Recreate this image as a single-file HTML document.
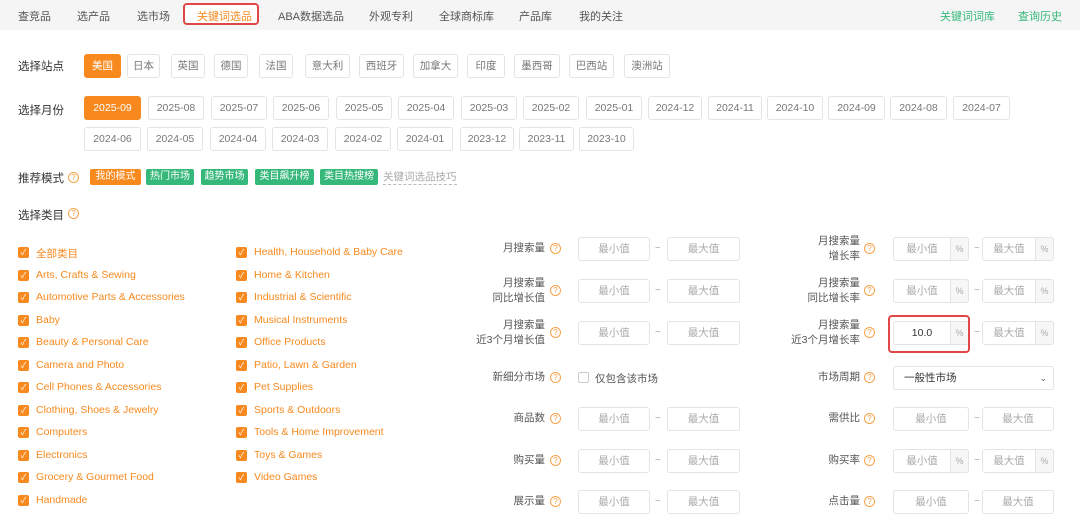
<!DOCTYPE html>
<html><head><meta charset="utf-8"><style>
*{box-sizing:border-box;margin:0;padding:0}
body{width:1080px;height:522px;background:#fff;font-family:"Liberation Sans","Noto Sans CJK SC",sans-serif;font-size:11px;color:#333;position:relative;overflow:hidden}
.a{position:absolute;white-space:nowrap}
.nav{position:absolute;left:0;top:0;width:1080px;height:30px;background:#f5f5f5}
.nv{position:absolute;top:8px;color:#555;font-size:11px}
.btn{position:absolute;height:24px;border:1px solid #e4e4e4;border-radius:3px;color:#777;font-size:10.5px;text-align:center;line-height:22px}
.on{background:#f7891e;border-color:#f7891e;color:#fff}
.lbl{position:absolute;font-size:11.5px;color:#333}
.tag{position:absolute;top:169px;height:16px;line-height:16px;color:#fff;font-size:10px;text-align:center;border-radius:2px;background:#35b87a}
.q{position:absolute;width:11px;height:11px;border:1px solid #f7a24a;border-radius:50%;color:#f7a24a;font-size:8px;line-height:9px;text-align:center}
.cb{position:absolute;width:11px;height:11px;background:#f7891e;border-radius:2px;color:#fff;font-size:8px;line-height:11px;text-align:center}
.ct{position:absolute;color:#f7891e;font-size:10.5px}
.in{position:absolute;height:24px;border:1px solid #e4e4e4;border-radius:3px;color:#aaa;font-size:10.5px;text-align:center;line-height:22px}
.pc{position:absolute;top:-1px;right:-1px;width:19px;height:24px;border:1px solid #e4e4e4;background:#f7f7f7;border-radius:0 3px 3px 0;color:#aaa;font-size:9px;line-height:22px}
.fl{position:absolute;text-align:right;color:#555;font-size:10.5px;line-height:15px}
.dash{position:absolute;color:#aaa;font-size:10px}
</style></head><body>
<div class="nav">
<span class="nv" style="left:18px">查竞品</span>
<span class="nv" style="left:77px">选产品</span>
<span class="nv" style="left:137px">选市场</span>
<div class="a" style="left:183px;top:3px;width:76px;height:22px;border:2px solid #e04848;border-radius:4px;background:#fff"></div>
<span class="nv" style="left:197px;color:#f7891e">关键词选品</span>
<span class="nv" style="left:278px">ABA数据选品</span>
<span class="nv" style="left:369px">外观专利</span>
<span class="nv" style="left:439px">全球商标库</span>
<span class="nv" style="left:519px">产品库</span>
<span class="nv" style="left:579px">我的关注</span>
<span class="nv" style="left:940px;color:#35b87a">关键词词库</span>
<span class="nv" style="left:1018px;color:#35b87a">查询历史</span>
</div>

<span class="lbl" style="left:18px;top:58px">选择站点</span>
<div class="btn on" style="left:84px;top:54px;width:37px">美国</div>
<div class="btn" style="left:127px;top:54px;width:33px">日本</div>
<div class="btn" style="left:171px;top:54px;width:34px">英国</div>
<div class="btn" style="left:214px;top:54px;width:34px">德国</div>
<div class="btn" style="left:259px;top:54px;width:34px">法国</div>
<div class="btn" style="left:305px;top:54px;width:45px">意大利</div>
<div class="btn" style="left:359px;top:54px;width:45px">西班牙</div>
<div class="btn" style="left:413px;top:54px;width:45px">加拿大</div>
<div class="btn" style="left:467px;top:54px;width:38px">印度</div>
<div class="btn" style="left:514px;top:54px;width:46px">墨西哥</div>
<div class="btn" style="left:569px;top:54px;width:45px">巴西站</div>
<div class="btn" style="left:624px;top:54px;width:46px">澳洲站</div>

<span class="lbl" style="left:18px;top:102px">选择月份</span>
<div class="btn on" style="left:84px;top:96px;width:57px">2025-09</div>
<div class="btn" style="left:148px;top:96px;width:56px">2025-08</div>
<div class="btn" style="left:211px;top:96px;width:56px">2025-07</div>
<div class="btn" style="left:273px;top:96px;width:56px">2025-06</div>
<div class="btn" style="left:336px;top:96px;width:56px">2025-05</div>
<div class="btn" style="left:398px;top:96px;width:56px">2025-04</div>
<div class="btn" style="left:461px;top:96px;width:56px">2025-03</div>
<div class="btn" style="left:523px;top:96px;width:56px">2025-02</div>
<div class="btn" style="left:586px;top:96px;width:56px">2025-01</div>
<div class="btn" style="left:648px;top:96px;width:54px">2024-12</div>
<div class="btn" style="left:708px;top:96px;width:54px">2024-11</div>
<div class="btn" style="left:767px;top:96px;width:56px">2024-10</div>
<div class="btn" style="left:828px;top:96px;width:57px">2024-09</div>
<div class="btn" style="left:890px;top:96px;width:57px">2024-08</div>
<div class="btn" style="left:953px;top:96px;width:57px">2024-07</div>
<div class="btn" style="left:84px;top:127px;width:57px">2024-06</div>
<div class="btn" style="left:147px;top:127px;width:56px">2024-05</div>
<div class="btn" style="left:210px;top:127px;width:56px">2024-04</div>
<div class="btn" style="left:272px;top:127px;width:56px">2024-03</div>
<div class="btn" style="left:335px;top:127px;width:56px">2024-02</div>
<div class="btn" style="left:397px;top:127px;width:56px">2024-01</div>
<div class="btn" style="left:460px;top:127px;width:54px">2023-12</div>
<div class="btn" style="left:519px;top:127px;width:55px">2023-11</div>
<div class="btn" style="left:579px;top:127px;width:55px">2023-10</div>

<span class="lbl" style="left:18px;top:170px">推荐模式</span>
<div class="q" style="left:68px;top:172px">?</div>
<div class="tag" style="left:90px;width:51px;background:#f7891e">我的模式</div>
<div class="tag" style="left:146px;width:48px">热门市场</div>
<div class="tag" style="left:201px;width:47px">趋势市场</div>
<div class="tag" style="left:255px;width:59px">类目飙升榜</div>
<div class="tag" style="left:320px;width:58px">类目热搜榜</div>
<span class="a" style="left:383px;top:169px;color:#aaa;font-size:10.5px;border-bottom:1px dashed #bbb">关键词选品技巧</span>

<span class="lbl" style="left:18px;top:207px">选择类目</span>
<div class="q" style="left:68px;top:208px">?</div>

<div class="cb" style="left:18px;top:247px">✓</div><span class="ct" style="left:36px;top:246px">全部类目</span>
<div class="cb" style="left:18px;top:270px">✓</div><span class="ct" style="left:36px;top:269px">Arts, Crafts &amp; Sewing</span>
<div class="cb" style="left:18px;top:292px">✓</div><span class="ct" style="left:36px;top:291px">Automotive Parts &amp; Accessories</span>
<div class="cb" style="left:18px;top:315px">✓</div><span class="ct" style="left:36px;top:314px">Baby</span>
<div class="cb" style="left:18px;top:337px">✓</div><span class="ct" style="left:36px;top:336px">Beauty &amp; Personal Care</span>
<div class="cb" style="left:18px;top:360px">✓</div><span class="ct" style="left:36px;top:359px">Camera and Photo</span>
<div class="cb" style="left:18px;top:382px">✓</div><span class="ct" style="left:36px;top:381px">Cell Phones &amp; Accessories</span>
<div class="cb" style="left:18px;top:405px">✓</div><span class="ct" style="left:36px;top:404px">Clothing, Shoes &amp; Jewelry</span>
<div class="cb" style="left:18px;top:427px">✓</div><span class="ct" style="left:36px;top:426px">Computers</span>
<div class="cb" style="left:18px;top:450px">✓</div><span class="ct" style="left:36px;top:449px">Electronics</span>
<div class="cb" style="left:18px;top:472px">✓</div><span class="ct" style="left:36px;top:471px">Grocery &amp; Gourmet Food</span>
<div class="cb" style="left:18px;top:495px">✓</div><span class="ct" style="left:36px;top:494px">Handmade</span>

<div class="cb" style="left:236px;top:247px">✓</div><span class="ct" style="left:254px;top:246px">Health, Household &amp; Baby Care</span>
<div class="cb" style="left:236px;top:270px">✓</div><span class="ct" style="left:254px;top:269px">Home &amp; Kitchen</span>
<div class="cb" style="left:236px;top:292px">✓</div><span class="ct" style="left:254px;top:291px">Industrial &amp; Scientific</span>
<div class="cb" style="left:236px;top:315px">✓</div><span class="ct" style="left:254px;top:314px">Musical Instruments</span>
<div class="cb" style="left:236px;top:337px">✓</div><span class="ct" style="left:254px;top:336px">Office Products</span>
<div class="cb" style="left:236px;top:360px">✓</div><span class="ct" style="left:254px;top:359px">Patio, Lawn &amp; Garden</span>
<div class="cb" style="left:236px;top:382px">✓</div><span class="ct" style="left:254px;top:381px">Pet Supplies</span>
<div class="cb" style="left:236px;top:405px">✓</div><span class="ct" style="left:254px;top:404px">Sports &amp; Outdoors</span>
<div class="cb" style="left:236px;top:427px">✓</div><span class="ct" style="left:254px;top:426px">Tools &amp; Home Improvement</span>
<div class="cb" style="left:236px;top:450px">✓</div><span class="ct" style="left:254px;top:449px">Toys &amp; Games</span>
<div class="cb" style="left:236px;top:472px">✓</div><span class="ct" style="left:254px;top:471px">Video Games</span>

<!-- left form -->
<div class="fl" style="right:535px;top:241px">月搜索量</div>
<div class="fl" style="right:535px;top:276px">月搜索量<br>同比增长值</div>
<div class="fl" style="right:535px;top:318px">月搜索量<br>近3个月增长值</div>
<div class="fl" style="right:535px;top:370px">新细分市场</div>
<div class="fl" style="right:535px;top:411px">商品数</div>
<div class="fl" style="right:535px;top:453px">购买量</div>
<div class="fl" style="right:535px;top:494px">展示量</div>
<div class="q" style="left:550px;top:243px">?</div>
<div class="q" style="left:550px;top:285px">?</div>
<div class="q" style="left:550px;top:327px">?</div>
<div class="q" style="left:550px;top:372px">?</div>
<div class="q" style="left:550px;top:413px">?</div>
<div class="q" style="left:550px;top:455px">?</div>
<div class="q" style="left:550px;top:496px">?</div>
<div class="in" style="left:578px;top:237px;width:72px">最小值</div><span class="dash" style="left:655px;top:243px">~</span><div class="in" style="left:667px;top:237px;width:73px">最大值</div>
<div class="in" style="left:578px;top:279px;width:72px">最小值</div><span class="dash" style="left:655px;top:285px">~</span><div class="in" style="left:667px;top:279px;width:73px">最大值</div>
<div class="in" style="left:578px;top:321px;width:72px">最小值</div><span class="dash" style="left:655px;top:327px">~</span><div class="in" style="left:667px;top:321px;width:73px">最大值</div>
<div class="a" style="left:578px;top:372px;width:11px;height:11px;border:1px solid #ccc;border-radius:2px"></div><span class="a" style="left:595px;top:371px;color:#555;font-size:10.5px">仅包含该市场</span>
<div class="in" style="left:578px;top:407px;width:72px">最小值</div><span class="dash" style="left:655px;top:413px">~</span><div class="in" style="left:667px;top:407px;width:73px">最大值</div>
<div class="in" style="left:578px;top:449px;width:72px">最小值</div><span class="dash" style="left:655px;top:455px">~</span><div class="in" style="left:667px;top:449px;width:73px">最大值</div>
<div class="in" style="left:578px;top:490px;width:72px">最小值</div><span class="dash" style="left:655px;top:496px">~</span><div class="in" style="left:667px;top:490px;width:73px">最大值</div>

<!-- right form -->
<div class="fl" style="right:220px;top:234px">月搜索量<br>增长率</div>
<div class="fl" style="right:220px;top:276px">月搜索量<br>同比增长率</div>
<div class="fl" style="right:220px;top:318px">月搜索量<br>近3个月增长率</div>
<div class="fl" style="right:220px;top:370px">市场周期</div>
<div class="fl" style="right:220px;top:411px">需供比</div>
<div class="fl" style="right:220px;top:453px">购买率</div>
<div class="fl" style="right:220px;top:494px">点击量</div>
<div class="q" style="left:864px;top:243px">?</div>
<div class="q" style="left:864px;top:285px">?</div>
<div class="q" style="left:864px;top:327px">?</div>
<div class="q" style="left:864px;top:372px">?</div>
<div class="q" style="left:864px;top:413px">?</div>
<div class="q" style="left:864px;top:455px">?</div>
<div class="q" style="left:864px;top:496px">?</div>
<div class="in" style="left:893px;top:237px;width:76px;padding-right:18px">最小值<div class="pc">%</div></div><span class="dash" style="left:974px;top:243px">~</span><div class="in" style="left:982px;top:237px;width:72px;padding-right:18px">最大值<div class="pc">%</div></div>
<div class="in" style="left:893px;top:279px;width:76px;padding-right:18px">最小值<div class="pc">%</div></div><span class="dash" style="left:974px;top:285px">~</span><div class="in" style="left:982px;top:279px;width:72px;padding-right:18px">最大值<div class="pc">%</div></div>
<div class="in" style="left:893px;top:321px;width:76px;padding-right:18px;color:#333">10.0<div class="pc">%</div></div><span class="dash" style="left:974px;top:327px">~</span><div class="in" style="left:982px;top:321px;width:72px;padding-right:18px">最大值<div class="pc">%</div></div>
<div class="a" style="left:888px;top:315px;width:82px;height:38px;border:2px solid #e04848;border-radius:4px"></div>
<div class="in" style="left:893px;top:366px;width:161px;text-align:left;padding-left:10px;color:#333">一般性市场<span style="position:absolute;right:6px;color:#666;font-size:9px">⌄</span></div>
<div class="in" style="left:893px;top:407px;width:76px">最小值</div><span class="dash" style="left:974px;top:413px">~</span><div class="in" style="left:982px;top:407px;width:72px">最大值</div>
<div class="in" style="left:893px;top:449px;width:76px;padding-right:18px">最小值<div class="pc">%</div></div><span class="dash" style="left:974px;top:455px">~</span><div class="in" style="left:982px;top:449px;width:72px;padding-right:18px">最大值<div class="pc">%</div></div>
<div class="in" style="left:893px;top:490px;width:76px">最小值</div><span class="dash" style="left:974px;top:496px">~</span><div class="in" style="left:982px;top:490px;width:72px">最大值</div>
</body></html>
